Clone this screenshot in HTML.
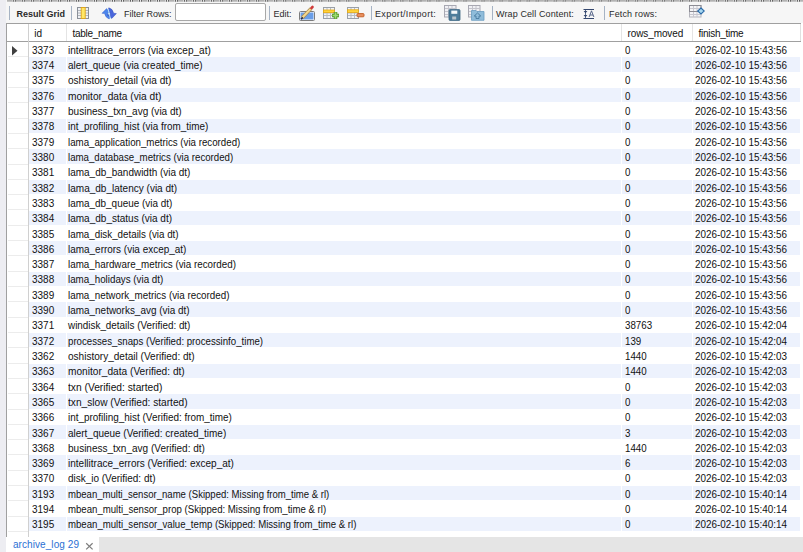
<!DOCTYPE html>
<html><head><meta charset="utf-8">
<style>
*{margin:0;padding:0;box-sizing:border-box}
html,body{width:803px;height:552px;overflow:hidden}
body{position:relative;background:#ededf2;font-family:"Liberation Sans",sans-serif;color:#111}
.a{position:absolute}
#tb{left:6px;top:0;width:797px;height:23px;background:#f6f6f6}
#dots{left:7px;top:0;width:796px;height:1px;background:repeating-linear-gradient(90deg,#4a4a4a 0 1px,#a0a0a0 1px 2px)}
#dots2{left:7px;top:1px;width:796px;height:1px;background:repeating-linear-gradient(90deg,#b4b4b4 0 1px,#dcdcdc 1px 2px)}
.sep{width:1px;height:14px;top:6px;background:#a6b3c4}
.tt{font-size:9px;line-height:9px;color:#2a2a2a;white-space:nowrap}
#grid{left:6px;top:23px;width:797px;height:514px;background:#fff;border-left:1px solid #a0a0a0}
#hdr{left:6px;top:23px;width:795px;height:19px;border-top:1px solid #a0a0a0;border-bottom:1px solid #a0a0a0;background:#fff}
.hs{top:24px;width:1px;height:17px;background:#e4e4e4}
.ht{font-size:10px;line-height:10px;white-space:nowrap;color:#111}
.row{position:absolute;left:6px;width:795px;height:15.31px}
.ind{position:absolute;left:2px;top:0;width:21px;height:100%;border-bottom:1px solid #ececec}
.c{position:absolute;top:0;height:100%;font-size:10px;line-height:15.31px;white-space:nowrap;overflow:hidden}
.alt .c{background:#edf2fd;border-bottom:1px solid #fff}
.c span{position:relative;top:0.95px;left:3px}
#tab{left:6px;top:537px;width:93px;height:15px;background:#fff}
#tabgray{left:99px;top:537px;width:704px;height:15px;background:#e5e5e5}
</style></head><body>
<div class="a" id="tb"></div>
<svg class="a" style="left:7px;top:0" width="796" height="2" viewBox="0 0 796 2"><rect x="0" y="0" width="796" height="1.7" fill="#b2b2b2"/><rect x="-3.91" y="0" width="3.90" height="1.7" fill="#ececec"/><rect x="-3.21" y="0" width="1" height="1.7" fill="#5c5c5c"/><rect x="-1.16" y="0" width="1" height="1.7" fill="#5c5c5c"/><rect x="5.10" y="0" width="3.90" height="1.7" fill="#ececec"/><rect x="5.80" y="0" width="1" height="1.7" fill="#5c5c5c"/><rect x="7.85" y="0" width="1" height="1.7" fill="#5c5c5c"/><rect x="14.11" y="0" width="3.90" height="1.7" fill="#ececec"/><rect x="14.81" y="0" width="1" height="1.7" fill="#5c5c5c"/><rect x="16.86" y="0" width="1" height="1.7" fill="#5c5c5c"/><rect x="23.13" y="0" width="3.90" height="1.7" fill="#ececec"/><rect x="23.83" y="0" width="1" height="1.7" fill="#5c5c5c"/><rect x="25.88" y="0" width="1" height="1.7" fill="#5c5c5c"/><rect x="32.14" y="0" width="3.90" height="1.7" fill="#ececec"/><rect x="32.84" y="0" width="1" height="1.7" fill="#5c5c5c"/><rect x="34.89" y="0" width="1" height="1.7" fill="#5c5c5c"/><rect x="41.15" y="0" width="3.90" height="1.7" fill="#ececec"/><rect x="41.85" y="0" width="1" height="1.7" fill="#5c5c5c"/><rect x="43.90" y="0" width="1" height="1.7" fill="#5c5c5c"/><rect x="50.16" y="0" width="3.90" height="1.7" fill="#ececec"/><rect x="50.86" y="0" width="1" height="1.7" fill="#5c5c5c"/><rect x="52.91" y="0" width="1" height="1.7" fill="#5c5c5c"/><rect x="59.18" y="0" width="3.90" height="1.7" fill="#ececec"/><rect x="59.88" y="0" width="1" height="1.7" fill="#5c5c5c"/><rect x="61.93" y="0" width="1" height="1.7" fill="#5c5c5c"/><rect x="68.19" y="0" width="3.90" height="1.7" fill="#ececec"/><rect x="68.89" y="0" width="1" height="1.7" fill="#5c5c5c"/><rect x="70.94" y="0" width="1" height="1.7" fill="#5c5c5c"/><rect x="77.20" y="0" width="3.90" height="1.7" fill="#ececec"/><rect x="77.90" y="0" width="1" height="1.7" fill="#5c5c5c"/><rect x="79.95" y="0" width="1" height="1.7" fill="#5c5c5c"/><rect x="86.22" y="0" width="3.90" height="1.7" fill="#ececec"/><rect x="86.92" y="0" width="1" height="1.7" fill="#5c5c5c"/><rect x="88.97" y="0" width="1" height="1.7" fill="#5c5c5c"/><rect x="95.23" y="0" width="3.90" height="1.7" fill="#ececec"/><rect x="95.93" y="0" width="1" height="1.7" fill="#5c5c5c"/><rect x="97.98" y="0" width="1" height="1.7" fill="#5c5c5c"/><rect x="104.24" y="0" width="3.90" height="1.7" fill="#ececec"/><rect x="104.94" y="0" width="1" height="1.7" fill="#5c5c5c"/><rect x="106.99" y="0" width="1" height="1.7" fill="#5c5c5c"/><rect x="113.26" y="0" width="3.90" height="1.7" fill="#ececec"/><rect x="113.96" y="0" width="1" height="1.7" fill="#5c5c5c"/><rect x="116.01" y="0" width="1" height="1.7" fill="#5c5c5c"/><rect x="122.27" y="0" width="3.90" height="1.7" fill="#ececec"/><rect x="122.97" y="0" width="1" height="1.7" fill="#5c5c5c"/><rect x="125.02" y="0" width="1" height="1.7" fill="#5c5c5c"/><rect x="131.28" y="0" width="3.90" height="1.7" fill="#ececec"/><rect x="131.98" y="0" width="1" height="1.7" fill="#5c5c5c"/><rect x="134.03" y="0" width="1" height="1.7" fill="#5c5c5c"/><rect x="140.30" y="0" width="3.90" height="1.7" fill="#ececec"/><rect x="141.00" y="0" width="1" height="1.7" fill="#5c5c5c"/><rect x="143.05" y="0" width="1" height="1.7" fill="#5c5c5c"/><rect x="149.31" y="0" width="3.90" height="1.7" fill="#ececec"/><rect x="150.01" y="0" width="1" height="1.7" fill="#5c5c5c"/><rect x="152.06" y="0" width="1" height="1.7" fill="#5c5c5c"/><rect x="158.32" y="0" width="3.90" height="1.7" fill="#ececec"/><rect x="159.02" y="0" width="1" height="1.7" fill="#5c5c5c"/><rect x="161.07" y="0" width="1" height="1.7" fill="#5c5c5c"/><rect x="167.33" y="0" width="3.90" height="1.7" fill="#ececec"/><rect x="168.03" y="0" width="1" height="1.7" fill="#5c5c5c"/><rect x="170.08" y="0" width="1" height="1.7" fill="#5c5c5c"/><rect x="176.35" y="0" width="3.90" height="1.7" fill="#ececec"/><rect x="177.05" y="0" width="1" height="1.7" fill="#5c5c5c"/><rect x="179.10" y="0" width="1" height="1.7" fill="#5c5c5c"/><rect x="185.36" y="0" width="3.90" height="1.7" fill="#ececec"/><rect x="186.06" y="0" width="1" height="1.7" fill="#5c5c5c"/><rect x="188.11" y="0" width="1" height="1.7" fill="#5c5c5c"/><rect x="194.37" y="0" width="3.90" height="1.7" fill="#ececec"/><rect x="195.07" y="0" width="1" height="1.7" fill="#5c5c5c"/><rect x="197.12" y="0" width="1" height="1.7" fill="#5c5c5c"/><rect x="203.39" y="0" width="3.90" height="1.7" fill="#ececec"/><rect x="204.09" y="0" width="1" height="1.7" fill="#5c5c5c"/><rect x="206.14" y="0" width="1" height="1.7" fill="#5c5c5c"/><rect x="212.40" y="0" width="3.90" height="1.7" fill="#ececec"/><rect x="213.10" y="0" width="1" height="1.7" fill="#5c5c5c"/><rect x="215.15" y="0" width="1" height="1.7" fill="#5c5c5c"/><rect x="221.41" y="0" width="3.90" height="1.7" fill="#ececec"/><rect x="222.11" y="0" width="1" height="1.7" fill="#5c5c5c"/><rect x="224.16" y="0" width="1" height="1.7" fill="#5c5c5c"/><rect x="230.43" y="0" width="3.90" height="1.7" fill="#ececec"/><rect x="231.12" y="0" width="1" height="1.7" fill="#5c5c5c"/><rect x="233.18" y="0" width="1" height="1.7" fill="#5c5c5c"/><rect x="239.44" y="0" width="3.90" height="1.7" fill="#ececec"/><rect x="240.14" y="0" width="1" height="1.7" fill="#5c5c5c"/><rect x="242.19" y="0" width="1" height="1.7" fill="#5c5c5c"/><rect x="248.45" y="0" width="3.90" height="1.7" fill="#ececec"/><rect x="249.15" y="0" width="1" height="1.7" fill="#5c5c5c"/><rect x="251.20" y="0" width="1" height="1.7" fill="#5c5c5c"/><rect x="257.46" y="0" width="3.90" height="1.7" fill="#ececec"/><rect x="258.16" y="0" width="1" height="1.7" fill="#5c5c5c"/><rect x="260.21" y="0" width="1" height="1.7" fill="#5c5c5c"/><rect x="266.48" y="0" width="3.90" height="1.7" fill="#ececec"/><rect x="267.18" y="0" width="1" height="1.7" fill="#5c5c5c"/><rect x="269.23" y="0" width="1" height="1.7" fill="#5c5c5c"/><rect x="275.49" y="0" width="3.90" height="1.7" fill="#ececec"/><rect x="276.19" y="0" width="1" height="1.7" fill="#5c5c5c"/><rect x="278.24" y="0" width="1" height="1.7" fill="#5c5c5c"/><rect x="284.50" y="0" width="3.90" height="1.7" fill="#ececec"/><rect x="285.20" y="0" width="1" height="1.7" fill="#5c5c5c"/><rect x="287.25" y="0" width="1" height="1.7" fill="#5c5c5c"/><rect x="293.52" y="0" width="3.90" height="1.7" fill="#ececec"/><rect x="294.22" y="0" width="1" height="1.7" fill="#5c5c5c"/><rect x="296.27" y="0" width="1" height="1.7" fill="#5c5c5c"/><rect x="302.53" y="0" width="3.90" height="1.7" fill="#ececec"/><rect x="303.23" y="0" width="1" height="1.7" fill="#5c5c5c"/><rect x="305.28" y="0" width="1" height="1.7" fill="#5c5c5c"/><rect x="311.54" y="0" width="3.90" height="1.7" fill="#ececec"/><rect x="312.24" y="0" width="1" height="1.7" fill="#5c5c5c"/><rect x="314.29" y="0" width="1" height="1.7" fill="#5c5c5c"/><rect x="320.56" y="0" width="3.90" height="1.7" fill="#ececec"/><rect x="321.25" y="0" width="1" height="1.7" fill="#5c5c5c"/><rect x="323.31" y="0" width="1" height="1.7" fill="#5c5c5c"/><rect x="329.57" y="0" width="3.90" height="1.7" fill="#ececec"/><rect x="330.27" y="0" width="1" height="1.7" fill="#5c5c5c"/><rect x="332.32" y="0" width="1" height="1.7" fill="#5c5c5c"/><rect x="338.58" y="0" width="3.90" height="1.7" fill="#ececec"/><rect x="339.28" y="0" width="1" height="1.7" fill="#5c5c5c"/><rect x="341.33" y="0" width="1" height="1.7" fill="#5c5c5c"/><rect x="347.59" y="0" width="3.90" height="1.7" fill="#ececec"/><rect x="348.29" y="0" width="1" height="1.7" fill="#5c5c5c"/><rect x="350.34" y="0" width="1" height="1.7" fill="#5c5c5c"/><rect x="356.61" y="0" width="3.90" height="1.7" fill="#ececec"/><rect x="357.31" y="0" width="1" height="1.7" fill="#5c5c5c"/><rect x="359.36" y="0" width="1" height="1.7" fill="#5c5c5c"/><rect x="365.62" y="0" width="3.90" height="1.7" fill="#ececec"/><rect x="366.32" y="0" width="1" height="1.7" fill="#5c5c5c"/><rect x="368.37" y="0" width="1" height="1.7" fill="#5c5c5c"/><rect x="374.63" y="0" width="3.90" height="1.7" fill="#ececec"/><rect x="375.33" y="0" width="1" height="1.7" fill="#5c5c5c"/><rect x="377.38" y="0" width="1" height="1.7" fill="#5c5c5c"/><rect x="383.65" y="0" width="3.90" height="1.7" fill="#ececec"/><rect x="384.35" y="0" width="1" height="1.7" fill="#5c5c5c"/><rect x="386.40" y="0" width="1" height="1.7" fill="#5c5c5c"/><rect x="392.66" y="0" width="3.90" height="1.7" fill="#ececec"/><rect x="393.36" y="0" width="1" height="1.7" fill="#5c5c5c"/><rect x="395.41" y="0" width="1" height="1.7" fill="#5c5c5c"/><rect x="401.67" y="0" width="3.90" height="1.7" fill="#ececec"/><rect x="402.37" y="0" width="1" height="1.7" fill="#5c5c5c"/><rect x="404.42" y="0" width="1" height="1.7" fill="#5c5c5c"/><rect x="410.69" y="0" width="3.90" height="1.7" fill="#ececec"/><rect x="411.38" y="0" width="1" height="1.7" fill="#5c5c5c"/><rect x="413.44" y="0" width="1" height="1.7" fill="#5c5c5c"/><rect x="419.70" y="0" width="3.90" height="1.7" fill="#ececec"/><rect x="420.40" y="0" width="1" height="1.7" fill="#5c5c5c"/><rect x="422.45" y="0" width="1" height="1.7" fill="#5c5c5c"/><rect x="428.71" y="0" width="3.90" height="1.7" fill="#ececec"/><rect x="429.41" y="0" width="1" height="1.7" fill="#5c5c5c"/><rect x="431.46" y="0" width="1" height="1.7" fill="#5c5c5c"/><rect x="437.72" y="0" width="3.90" height="1.7" fill="#ececec"/><rect x="438.42" y="0" width="1" height="1.7" fill="#5c5c5c"/><rect x="440.47" y="0" width="1" height="1.7" fill="#5c5c5c"/><rect x="446.74" y="0" width="3.90" height="1.7" fill="#ececec"/><rect x="447.44" y="0" width="1" height="1.7" fill="#5c5c5c"/><rect x="449.49" y="0" width="1" height="1.7" fill="#5c5c5c"/><rect x="455.75" y="0" width="3.90" height="1.7" fill="#ececec"/><rect x="456.45" y="0" width="1" height="1.7" fill="#5c5c5c"/><rect x="458.50" y="0" width="1" height="1.7" fill="#5c5c5c"/><rect x="464.76" y="0" width="3.90" height="1.7" fill="#ececec"/><rect x="465.46" y="0" width="1" height="1.7" fill="#5c5c5c"/><rect x="467.51" y="0" width="1" height="1.7" fill="#5c5c5c"/><rect x="473.78" y="0" width="3.90" height="1.7" fill="#ececec"/><rect x="474.48" y="0" width="1" height="1.7" fill="#5c5c5c"/><rect x="476.53" y="0" width="1" height="1.7" fill="#5c5c5c"/><rect x="482.79" y="0" width="3.90" height="1.7" fill="#ececec"/><rect x="483.49" y="0" width="1" height="1.7" fill="#5c5c5c"/><rect x="485.54" y="0" width="1" height="1.7" fill="#5c5c5c"/><rect x="491.80" y="0" width="3.90" height="1.7" fill="#ececec"/><rect x="492.50" y="0" width="1" height="1.7" fill="#5c5c5c"/><rect x="494.55" y="0" width="1" height="1.7" fill="#5c5c5c"/><rect x="500.81" y="0" width="3.90" height="1.7" fill="#ececec"/><rect x="501.51" y="0" width="1" height="1.7" fill="#5c5c5c"/><rect x="503.56" y="0" width="1" height="1.7" fill="#5c5c5c"/><rect x="509.83" y="0" width="3.90" height="1.7" fill="#ececec"/><rect x="510.53" y="0" width="1" height="1.7" fill="#5c5c5c"/><rect x="512.58" y="0" width="1" height="1.7" fill="#5c5c5c"/><rect x="518.84" y="0" width="3.90" height="1.7" fill="#ececec"/><rect x="519.54" y="0" width="1" height="1.7" fill="#5c5c5c"/><rect x="521.59" y="0" width="1" height="1.7" fill="#5c5c5c"/><rect x="527.85" y="0" width="3.90" height="1.7" fill="#ececec"/><rect x="528.55" y="0" width="1" height="1.7" fill="#5c5c5c"/><rect x="530.60" y="0" width="1" height="1.7" fill="#5c5c5c"/><rect x="536.87" y="0" width="3.90" height="1.7" fill="#ececec"/><rect x="537.57" y="0" width="1" height="1.7" fill="#5c5c5c"/><rect x="539.62" y="0" width="1" height="1.7" fill="#5c5c5c"/><rect x="545.88" y="0" width="3.90" height="1.7" fill="#ececec"/><rect x="546.58" y="0" width="1" height="1.7" fill="#5c5c5c"/><rect x="548.63" y="0" width="1" height="1.7" fill="#5c5c5c"/><rect x="554.89" y="0" width="3.90" height="1.7" fill="#ececec"/><rect x="555.59" y="0" width="1" height="1.7" fill="#5c5c5c"/><rect x="557.64" y="0" width="1" height="1.7" fill="#5c5c5c"/><rect x="563.91" y="0" width="3.90" height="1.7" fill="#ececec"/><rect x="564.61" y="0" width="1" height="1.7" fill="#5c5c5c"/><rect x="566.66" y="0" width="1" height="1.7" fill="#5c5c5c"/><rect x="572.92" y="0" width="3.90" height="1.7" fill="#ececec"/><rect x="573.62" y="0" width="1" height="1.7" fill="#5c5c5c"/><rect x="575.67" y="0" width="1" height="1.7" fill="#5c5c5c"/><rect x="581.93" y="0" width="3.90" height="1.7" fill="#ececec"/><rect x="582.63" y="0" width="1" height="1.7" fill="#5c5c5c"/><rect x="584.68" y="0" width="1" height="1.7" fill="#5c5c5c"/><rect x="590.94" y="0" width="3.90" height="1.7" fill="#ececec"/><rect x="591.64" y="0" width="1" height="1.7" fill="#5c5c5c"/><rect x="593.69" y="0" width="1" height="1.7" fill="#5c5c5c"/><rect x="599.96" y="0" width="3.90" height="1.7" fill="#ececec"/><rect x="600.66" y="0" width="1" height="1.7" fill="#5c5c5c"/><rect x="602.71" y="0" width="1" height="1.7" fill="#5c5c5c"/><rect x="608.97" y="0" width="3.90" height="1.7" fill="#ececec"/><rect x="609.67" y="0" width="1" height="1.7" fill="#5c5c5c"/><rect x="611.72" y="0" width="1" height="1.7" fill="#5c5c5c"/><rect x="617.98" y="0" width="3.90" height="1.7" fill="#ececec"/><rect x="618.68" y="0" width="1" height="1.7" fill="#5c5c5c"/><rect x="620.73" y="0" width="1" height="1.7" fill="#5c5c5c"/><rect x="627.00" y="0" width="3.90" height="1.7" fill="#ececec"/><rect x="627.70" y="0" width="1" height="1.7" fill="#5c5c5c"/><rect x="629.75" y="0" width="1" height="1.7" fill="#5c5c5c"/><rect x="636.01" y="0" width="3.90" height="1.7" fill="#ececec"/><rect x="636.71" y="0" width="1" height="1.7" fill="#5c5c5c"/><rect x="638.76" y="0" width="1" height="1.7" fill="#5c5c5c"/><rect x="645.02" y="0" width="3.90" height="1.7" fill="#ececec"/><rect x="645.72" y="0" width="1" height="1.7" fill="#5c5c5c"/><rect x="647.77" y="0" width="1" height="1.7" fill="#5c5c5c"/><rect x="654.04" y="0" width="3.90" height="1.7" fill="#ececec"/><rect x="654.74" y="0" width="1" height="1.7" fill="#5c5c5c"/><rect x="656.79" y="0" width="1" height="1.7" fill="#5c5c5c"/><rect x="663.05" y="0" width="3.90" height="1.7" fill="#ececec"/><rect x="663.75" y="0" width="1" height="1.7" fill="#5c5c5c"/><rect x="665.80" y="0" width="1" height="1.7" fill="#5c5c5c"/><rect x="672.06" y="0" width="3.90" height="1.7" fill="#ececec"/><rect x="672.76" y="0" width="1" height="1.7" fill="#5c5c5c"/><rect x="674.81" y="0" width="1" height="1.7" fill="#5c5c5c"/><rect x="681.07" y="0" width="3.90" height="1.7" fill="#ececec"/><rect x="681.77" y="0" width="1" height="1.7" fill="#5c5c5c"/><rect x="683.82" y="0" width="1" height="1.7" fill="#5c5c5c"/><rect x="690.09" y="0" width="3.90" height="1.7" fill="#ececec"/><rect x="690.79" y="0" width="1" height="1.7" fill="#5c5c5c"/><rect x="692.84" y="0" width="1" height="1.7" fill="#5c5c5c"/><rect x="699.10" y="0" width="3.90" height="1.7" fill="#ececec"/><rect x="699.80" y="0" width="1" height="1.7" fill="#5c5c5c"/><rect x="701.85" y="0" width="1" height="1.7" fill="#5c5c5c"/><rect x="708.11" y="0" width="3.90" height="1.7" fill="#ececec"/><rect x="708.81" y="0" width="1" height="1.7" fill="#5c5c5c"/><rect x="710.86" y="0" width="1" height="1.7" fill="#5c5c5c"/><rect x="717.13" y="0" width="3.90" height="1.7" fill="#ececec"/><rect x="717.83" y="0" width="1" height="1.7" fill="#5c5c5c"/><rect x="719.88" y="0" width="1" height="1.7" fill="#5c5c5c"/><rect x="726.14" y="0" width="3.90" height="1.7" fill="#ececec"/><rect x="726.84" y="0" width="1" height="1.7" fill="#5c5c5c"/><rect x="728.89" y="0" width="1" height="1.7" fill="#5c5c5c"/><rect x="735.15" y="0" width="3.90" height="1.7" fill="#ececec"/><rect x="735.85" y="0" width="1" height="1.7" fill="#5c5c5c"/><rect x="737.90" y="0" width="1" height="1.7" fill="#5c5c5c"/><rect x="744.17" y="0" width="3.90" height="1.7" fill="#ececec"/><rect x="744.87" y="0" width="1" height="1.7" fill="#5c5c5c"/><rect x="746.92" y="0" width="1" height="1.7" fill="#5c5c5c"/><rect x="753.18" y="0" width="3.90" height="1.7" fill="#ececec"/><rect x="753.88" y="0" width="1" height="1.7" fill="#5c5c5c"/><rect x="755.93" y="0" width="1" height="1.7" fill="#5c5c5c"/><rect x="762.19" y="0" width="3.90" height="1.7" fill="#ececec"/><rect x="762.89" y="0" width="1" height="1.7" fill="#5c5c5c"/><rect x="764.94" y="0" width="1" height="1.7" fill="#5c5c5c"/><rect x="771.20" y="0" width="3.90" height="1.7" fill="#ececec"/><rect x="771.90" y="0" width="1" height="1.7" fill="#5c5c5c"/><rect x="773.95" y="0" width="1" height="1.7" fill="#5c5c5c"/><rect x="780.22" y="0" width="3.90" height="1.7" fill="#ececec"/><rect x="780.92" y="0" width="1" height="1.7" fill="#5c5c5c"/><rect x="782.97" y="0" width="1" height="1.7" fill="#5c5c5c"/><rect x="789.23" y="0" width="3.90" height="1.7" fill="#ececec"/><rect x="789.93" y="0" width="1" height="1.7" fill="#5c5c5c"/><rect x="791.98" y="0" width="1" height="1.7" fill="#5c5c5c"/></svg>
<div class="a sep" style="left:9px"></div>
<div class="a tt" style="left:16.6px;top:9.5px;font-weight:bold">Result Grid</div>
<div class="a sep" style="left:71px"></div>
<svg class="a" style="left:77px;top:7px" width="12" height="12" viewBox="0 0 12 12">
 <rect x="0.5" y="0.5" width="11" height="11" fill="#eef0f3" stroke="#8a9099"/>
 <path d="M1 3.5H11M1 6H11M1 8.5H11" stroke="#b0b5bc" stroke-width="1"/>
 <rect x="4.2" y="0.5" width="4" height="11" fill="#ffe866" stroke="#e0a418" stroke-width="0.9"/>
</svg>
<svg class="a" style="left:98px;top:3px" width="24" height="20" viewBox="0 0 24 20">
 <path d="M8.6 5.6 L4 10.3 L6.6 10.6 Q7.6 14.8 11.2 16 L12 14 Q10 12.8 9.6 10.2 L11.6 9.6 Z" fill="#4c86ec" stroke="#3a62c8" stroke-width="0.5"/>
 <path d="M10.8 4.8 Q14.8 5.8 15.6 10.2 L18.4 10.6 L13.8 15.4 L9.4 12 L12.4 11.4 Q12 8.4 10.2 6.8 Z" fill="#4a66dc" stroke="#3450b8" stroke-width="0.5"/>
 <path d="M10 5.8 L12.4 15.6" stroke="#bfeeff" stroke-width="0.9"/>
</svg>
<div class="a tt" style="left:124px;top:9.5px">Filter Rows:</div>
<div class="a" style="left:175px;top:3px;width:91px;height:18px;border:1px solid #a8a8a8;border-radius:2px;background:#fff"></div>
<div class="a sep" style="left:269px"></div>
<div class="a tt" style="left:273.4px;top:9.5px">Edit:</div>
<svg class="a" style="left:299px;top:5px" width="17" height="16" viewBox="0 0 17 16">
 <rect x="0.5" y="6.5" width="15" height="9" rx="1" fill="#e8eef8" stroke="#7c7c7c"/>
 <rect x="1.6" y="7.6" width="12.8" height="6.8" fill="#6a9ee8"/>
 <path d="M3.2 12.8 L12.2 3.4" stroke="#a88a50" stroke-width="3.4"/>
 <path d="M3.2 12.8 L12.2 3.4" stroke="#f4d890" stroke-width="2"/>
 <path d="M12.4 3.1 L13.5 2" stroke="#d03a3a" stroke-width="2.6" stroke-linecap="round"/>
 <path d="M2 14.2 L3.8 12.4" stroke="#2a2a40" stroke-width="1.6"/>
</svg>
<svg class="a" style="left:323px;top:7px" width="18" height="13" viewBox="0 0 18 13">
 <rect x="0.5" y="0.5" width="11" height="11" fill="#f2f3f5" stroke="#9aa0a8"/>
 <path d="M1 6H11M1 8.5H11M4 1V11M7.5 1V11" stroke="#b8bcc2" stroke-width="1"/>
 <rect x="0.5" y="3" width="11" height="2.6" fill="#ffd43a" stroke="#e8a810" stroke-width="0.8"/>
 <path d="M12.5 5 V12 M9 8.5 H16" stroke="#5a9a30" stroke-width="3.6"/>
 <path d="M12.5 5.6 V11.4 M9.6 8.5 H15.4" stroke="#9ddc70" stroke-width="1.6"/>
</svg>
<svg class="a" style="left:347px;top:7px" width="18" height="13" viewBox="0 0 18 13">
 <rect x="0.5" y="0.5" width="11" height="11" fill="#f2f3f5" stroke="#9aa0a8"/>
 <path d="M1 6H11M1 8.5H11M4 1V11M7.5 1V11" stroke="#b8bcc2" stroke-width="1"/>
 <rect x="0.5" y="2.8" width="11" height="2.6" fill="#ffd43a" stroke="#e8a810" stroke-width="0.8"/>
 <rect x="10" y="6.6" width="7" height="3.2" rx="0.8" fill="#e89060" stroke="#c05a20" stroke-width="0.9"/>
</svg>
<div class="a sep" style="left:371px"></div>
<div class="a tt" style="left:375px;top:9.5px;letter-spacing:0.33px">Export/Import:</div>
<svg class="a" style="left:444px;top:5px" width="17" height="16" viewBox="0 0 17 16">
 <rect x="0.5" y="0.5" width="11.5" height="11.5" fill="#f0f0f4" stroke="#a8a8b2"/>
 <path d="M1 3.5H12M1 6.5H12M1 9.5H12M4.5 1V12M8 1V12" stroke="#c4c4cc" stroke-width="1"/>
 <rect x="5" y="4.6" width="11" height="10.8" rx="1" fill="#4d7c9a" stroke="#3a6482" stroke-width="0.8"/>
 <rect x="7.3" y="5.6" width="6" height="3.2" fill="#f4f8fa"/>
 <rect x="8.2" y="11.5" width="4" height="3" fill="#b8c4cc"/>
</svg>
<svg class="a" style="left:468px;top:5px" width="18" height="16" viewBox="0 0 18 16">
 <rect x="0.5" y="0.5" width="11.5" height="11.5" fill="#f0f0f4" stroke="#a8a8b2"/>
 <path d="M1 3.5H12M1 6.5H12M1 9.5H12M4.5 1V12M8 1V12" stroke="#c4c4cc" stroke-width="1"/>
 <path d="M3.5 5.5 H8 L9 6.5 H16 V15.3 H3.5Z" fill="#8fbcda" stroke="#6a9cc0" stroke-width="0.8"/>
 <path d="M9.5 8 L12.8 11 L11 11 L11 13.5 L8 13.5 L8 11 L6.2 11Z" fill="none" stroke="#4a7ca0" stroke-width="0.9"/>
</svg>
<div class="a sep" style="left:492px"></div>
<div class="a tt" style="left:496px;top:9.5px;letter-spacing:0.11px">Wrap Cell Content:</div>
<svg class="a" style="left:583px;top:8px" width="12" height="12" viewBox="0 0 12 12">
 <path d="M0.5 1.5H11M0.5 10.5H11" stroke="#34476e" stroke-width="1"/>
 <path d="M2.5 2V10" stroke="#34476e" stroke-width="0.8"/>
 <path d="M0.6 2.9 L4.4 2.9 L2.5 5.3Z M0.6 7 L4.4 7 L2.5 9.3Z" fill="#34476e"/>
 <path d="M6.1 9 L8.5 2.8 L10.9 9 M7 7 H10" fill="none" stroke="#4a5a80" stroke-width="0.9"/>
</svg>
<div class="a sep" style="left:604px"></div>
<div class="a tt" style="left:609px;top:9.5px;letter-spacing:0.14px">Fetch rows:</div>
<svg class="a" style="left:689px;top:5px" width="16" height="13" viewBox="0 0 16 13">
 <rect x="0.5" y="0.5" width="11.5" height="11.5" fill="#f4f4f6" stroke="#b4b4bc"/>
 <path d="M1 3.5H12M1 6.5H12M1 9.5H12M4.5 1V12M8 1V12" stroke="#c8c8d0" stroke-width="1"/>
 <rect x="0.5" y="0.5" width="11.5" height="6" fill="none" stroke="#8c8c94"/>
 <path d="M12 3 L15.3 6 L12 9 L8.7 6Z" fill="#a8d8f0" stroke="#2a6aa8" stroke-width="1.1"/>
</svg>

<div class="a" id="grid"></div>
<div class="a" id="hdr"></div>
<div class="a hs" style="left:66px"></div>
<div class="a hs" style="left:621px"></div>
<div class="a hs" style="left:692px"></div>
<div class="a hs" style="left:800px;background:#e0e0e0"></div>
<div class="a ht" style="left:34.3px;top:29px">id</div>
<div class="a ht" style="left:72.5px;top:29px;letter-spacing:-0.3px">table_name</div>
<div class="a ht" style="left:627.5px;top:29px;letter-spacing:-0.1px">rows_moved</div>
<div class="a ht" style="left:698.5px;top:29px;letter-spacing:-0.28px">finish_time</div>
<div class="a" style="left:6px;top:42px;width:797px;height:494px;overflow:hidden">
<div style="position:absolute;left:-6px;top:-42px;width:803px;height:552px">
<div class="row" style="top:42.10px">
<div class="ind"></div>
<div class="c" style="left:23px;width:37px;font-size:10.5px"><span style="left:3px;top:0.91px;display:inline-block;transform-origin:0 0;transform:scaleX(0.95)">3373</span></div>
<div class="c" style="left:61px;width:554px;font-size:11.0px"><span style="left:0.8px;top:0.74px;display:inline-block;transform-origin:0 0;transform:scaleX(0.9123)">intellitrace_errors (via excep_at)</span></div>
<div class="c" style="left:616px;width:70px;font-size:10.5px"><span style="left:2.7px;top:0.91px;display:inline-block;transform-origin:0 0;transform:scaleX(0.93)">0</span></div>
<div class="c" style="left:687px;width:107px;font-size:10.5px"><span style="left:2.2px;top:0.91px;display:inline-block;transform-origin:0 0;transform:scaleX(0.943)">2026-02-10 15:43:56</span></div>
</div>
<div class="row alt" style="top:57.41px">
<div class="ind"></div>
<div class="c" style="left:23px;width:37px;font-size:10.5px"><span style="left:3px;top:0.60px;display:inline-block;transform-origin:0 0;transform:scaleX(0.95)">3374</span></div>
<div class="c" style="left:61px;width:554px;font-size:11.0px"><span style="left:0.8px;top:0.43px;display:inline-block;transform-origin:0 0;transform:scaleX(0.9014)">alert_queue (via created_time)</span></div>
<div class="c" style="left:616px;width:70px;font-size:10.5px"><span style="left:2.7px;top:0.60px;display:inline-block;transform-origin:0 0;transform:scaleX(0.93)">0</span></div>
<div class="c" style="left:687px;width:107px;font-size:10.5px"><span style="left:2.2px;top:0.60px;display:inline-block;transform-origin:0 0;transform:scaleX(0.943)">2026-02-10 15:43:56</span></div>
</div>
<div class="row" style="top:72.72px">
<div class="ind"></div>
<div class="c" style="left:23px;width:37px;font-size:10.5px"><span style="left:3px;top:0.29px;display:inline-block;transform-origin:0 0;transform:scaleX(0.95)">3375</span></div>
<div class="c" style="left:61px;width:554px;font-size:11.0px"><span style="left:0.8px;top:0.12px;display:inline-block;transform-origin:0 0;transform:scaleX(0.9143)">oshistory_detail (via dt)</span></div>
<div class="c" style="left:616px;width:70px;font-size:10.5px"><span style="left:2.7px;top:0.29px;display:inline-block;transform-origin:0 0;transform:scaleX(0.93)">0</span></div>
<div class="c" style="left:687px;width:107px;font-size:10.5px"><span style="left:2.2px;top:0.29px;display:inline-block;transform-origin:0 0;transform:scaleX(0.943)">2026-02-10 15:43:56</span></div>
</div>
<div class="row alt" style="top:88.03px">
<div class="ind"></div>
<div class="c" style="left:23px;width:37px;font-size:10.5px"><span style="left:3px;top:0.98px;display:inline-block;transform-origin:0 0;transform:scaleX(0.95)">3376</span></div>
<div class="c" style="left:61px;width:554px;font-size:11.0px"><span style="left:0.8px;top:0.81px;display:inline-block;transform-origin:0 0;transform:scaleX(0.9261)">monitor_data (via dt)</span></div>
<div class="c" style="left:616px;width:70px;font-size:10.5px"><span style="left:2.7px;top:0.98px;display:inline-block;transform-origin:0 0;transform:scaleX(0.93)">0</span></div>
<div class="c" style="left:687px;width:107px;font-size:10.5px"><span style="left:2.2px;top:0.98px;display:inline-block;transform-origin:0 0;transform:scaleX(0.943)">2026-02-10 15:43:56</span></div>
</div>
<div class="row" style="top:103.34px">
<div class="ind"></div>
<div class="c" style="left:23px;width:37px;font-size:10.5px"><span style="left:3px;top:0.67px;display:inline-block;transform-origin:0 0;transform:scaleX(0.95)">3377</span></div>
<div class="c" style="left:61px;width:554px;font-size:11.0px"><span style="left:0.8px;top:0.50px;display:inline-block;transform-origin:0 0;transform:scaleX(0.9113)">business_txn_avg (via dt)</span></div>
<div class="c" style="left:616px;width:70px;font-size:10.5px"><span style="left:2.7px;top:0.67px;display:inline-block;transform-origin:0 0;transform:scaleX(0.93)">0</span></div>
<div class="c" style="left:687px;width:107px;font-size:10.5px"><span style="left:2.2px;top:0.67px;display:inline-block;transform-origin:0 0;transform:scaleX(0.943)">2026-02-10 15:43:56</span></div>
</div>
<div class="row alt" style="top:118.65px">
<div class="ind"></div>
<div class="c" style="left:23px;width:37px;font-size:10.5px"><span style="left:3px;top:0.36px;display:inline-block;transform-origin:0 0;transform:scaleX(0.95)">3378</span></div>
<div class="c" style="left:61px;width:554px;font-size:11.0px"><span style="left:0.8px;top:0.19px;display:inline-block;transform-origin:0 0;transform:scaleX(0.8994)">int_profiling_hist (via from_time)</span></div>
<div class="c" style="left:616px;width:70px;font-size:10.5px"><span style="left:2.7px;top:0.36px;display:inline-block;transform-origin:0 0;transform:scaleX(0.93)">0</span></div>
<div class="c" style="left:687px;width:107px;font-size:10.5px"><span style="left:2.2px;top:0.36px;display:inline-block;transform-origin:0 0;transform:scaleX(0.943)">2026-02-10 15:43:56</span></div>
</div>
<div class="row" style="top:133.96px">
<div class="ind"></div>
<div class="c" style="left:23px;width:37px;font-size:10.5px"><span style="left:3px;top:1.05px;display:inline-block;transform-origin:0 0;transform:scaleX(0.95)">3379</span></div>
<div class="c" style="left:61px;width:554px;font-size:11.0px"><span style="left:0.8px;top:0.88px;display:inline-block;transform-origin:0 0;transform:scaleX(0.8835)">lama_application_metrics (via recorded)</span></div>
<div class="c" style="left:616px;width:70px;font-size:10.5px"><span style="left:2.7px;top:1.05px;display:inline-block;transform-origin:0 0;transform:scaleX(0.93)">0</span></div>
<div class="c" style="left:687px;width:107px;font-size:10.5px"><span style="left:2.2px;top:1.05px;display:inline-block;transform-origin:0 0;transform:scaleX(0.943)">2026-02-10 15:43:56</span></div>
</div>
<div class="row alt" style="top:149.27px">
<div class="ind"></div>
<div class="c" style="left:23px;width:37px;font-size:10.5px"><span style="left:3px;top:0.74px;display:inline-block;transform-origin:0 0;transform:scaleX(0.95)">3380</span></div>
<div class="c" style="left:61px;width:554px;font-size:11.0px"><span style="left:0.8px;top:0.57px;display:inline-block;transform-origin:0 0;transform:scaleX(0.8802)">lama_database_metrics (via recorded)</span></div>
<div class="c" style="left:616px;width:70px;font-size:10.5px"><span style="left:2.7px;top:0.74px;display:inline-block;transform-origin:0 0;transform:scaleX(0.93)">0</span></div>
<div class="c" style="left:687px;width:107px;font-size:10.5px"><span style="left:2.2px;top:0.74px;display:inline-block;transform-origin:0 0;transform:scaleX(0.943)">2026-02-10 15:43:56</span></div>
</div>
<div class="row" style="top:164.58px">
<div class="ind"></div>
<div class="c" style="left:23px;width:37px;font-size:10.5px"><span style="left:3px;top:0.43px;display:inline-block;transform-origin:0 0;transform:scaleX(0.95)">3381</span></div>
<div class="c" style="left:61px;width:554px;font-size:11.0px"><span style="left:0.8px;top:0.26px;display:inline-block;transform-origin:0 0;transform:scaleX(0.9060)">lama_db_bandwidth (via dt)</span></div>
<div class="c" style="left:616px;width:70px;font-size:10.5px"><span style="left:2.7px;top:0.43px;display:inline-block;transform-origin:0 0;transform:scaleX(0.93)">0</span></div>
<div class="c" style="left:687px;width:107px;font-size:10.5px"><span style="left:2.2px;top:0.43px;display:inline-block;transform-origin:0 0;transform:scaleX(0.943)">2026-02-10 15:43:56</span></div>
</div>
<div class="row alt" style="top:179.89px">
<div class="ind"></div>
<div class="c" style="left:23px;width:37px;font-size:10.5px"><span style="left:3px;top:1.12px;display:inline-block;transform-origin:0 0;transform:scaleX(0.95)">3382</span></div>
<div class="c" style="left:61px;width:554px;font-size:11.0px"><span style="left:0.8px;top:0.95px;display:inline-block;transform-origin:0 0;transform:scaleX(0.9110)">lama_db_latency (via dt)</span></div>
<div class="c" style="left:616px;width:70px;font-size:10.5px"><span style="left:2.7px;top:1.12px;display:inline-block;transform-origin:0 0;transform:scaleX(0.93)">0</span></div>
<div class="c" style="left:687px;width:107px;font-size:10.5px"><span style="left:2.2px;top:1.12px;display:inline-block;transform-origin:0 0;transform:scaleX(0.943)">2026-02-10 15:43:56</span></div>
</div>
<div class="row" style="top:195.20px">
<div class="ind"></div>
<div class="c" style="left:23px;width:37px;font-size:10.5px"><span style="left:3px;top:0.81px;display:inline-block;transform-origin:0 0;transform:scaleX(0.95)">3383</span></div>
<div class="c" style="left:61px;width:554px;font-size:11.0px"><span style="left:0.8px;top:0.64px;display:inline-block;transform-origin:0 0;transform:scaleX(0.9027)">lama_db_queue (via dt)</span></div>
<div class="c" style="left:616px;width:70px;font-size:10.5px"><span style="left:2.7px;top:0.81px;display:inline-block;transform-origin:0 0;transform:scaleX(0.93)">0</span></div>
<div class="c" style="left:687px;width:107px;font-size:10.5px"><span style="left:2.2px;top:0.81px;display:inline-block;transform-origin:0 0;transform:scaleX(0.943)">2026-02-10 15:43:56</span></div>
</div>
<div class="row alt" style="top:210.51px">
<div class="ind"></div>
<div class="c" style="left:23px;width:37px;font-size:10.5px"><span style="left:3px;top:0.50px;display:inline-block;transform-origin:0 0;transform:scaleX(0.95)">3384</span></div>
<div class="c" style="left:61px;width:554px;font-size:11.0px"><span style="left:0.8px;top:0.33px;display:inline-block;transform-origin:0 0;transform:scaleX(0.9097)">lama_db_status (via dt)</span></div>
<div class="c" style="left:616px;width:70px;font-size:10.5px"><span style="left:2.7px;top:0.50px;display:inline-block;transform-origin:0 0;transform:scaleX(0.93)">0</span></div>
<div class="c" style="left:687px;width:107px;font-size:10.5px"><span style="left:2.2px;top:0.50px;display:inline-block;transform-origin:0 0;transform:scaleX(0.943)">2026-02-10 15:43:56</span></div>
</div>
<div class="row" style="top:225.82px">
<div class="ind"></div>
<div class="c" style="left:23px;width:37px;font-size:10.5px"><span style="left:3px;top:1.19px;display:inline-block;transform-origin:0 0;transform:scaleX(0.95)">3385</span></div>
<div class="c" style="left:61px;width:554px;font-size:11.0px"><span style="left:0.8px;top:1.02px;display:inline-block;transform-origin:0 0;transform:scaleX(0.8911)">lama_disk_details (via dt)</span></div>
<div class="c" style="left:616px;width:70px;font-size:10.5px"><span style="left:2.7px;top:1.19px;display:inline-block;transform-origin:0 0;transform:scaleX(0.93)">0</span></div>
<div class="c" style="left:687px;width:107px;font-size:10.5px"><span style="left:2.2px;top:1.19px;display:inline-block;transform-origin:0 0;transform:scaleX(0.943)">2026-02-10 15:43:56</span></div>
</div>
<div class="row alt" style="top:241.13px">
<div class="ind"></div>
<div class="c" style="left:23px;width:37px;font-size:10.5px"><span style="left:3px;top:0.88px;display:inline-block;transform-origin:0 0;transform:scaleX(0.95)">3386</span></div>
<div class="c" style="left:61px;width:554px;font-size:11.0px"><span style="left:0.8px;top:0.71px;display:inline-block;transform-origin:0 0;transform:scaleX(0.9047)">lama_errors (via excep_at)</span></div>
<div class="c" style="left:616px;width:70px;font-size:10.5px"><span style="left:2.7px;top:0.88px;display:inline-block;transform-origin:0 0;transform:scaleX(0.93)">0</span></div>
<div class="c" style="left:687px;width:107px;font-size:10.5px"><span style="left:2.2px;top:0.88px;display:inline-block;transform-origin:0 0;transform:scaleX(0.943)">2026-02-10 15:43:56</span></div>
</div>
<div class="row" style="top:256.44px">
<div class="ind"></div>
<div class="c" style="left:23px;width:37px;font-size:10.5px"><span style="left:3px;top:0.57px;display:inline-block;transform-origin:0 0;transform:scaleX(0.95)">3387</span></div>
<div class="c" style="left:61px;width:554px;font-size:11.0px"><span style="left:0.8px;top:0.40px;display:inline-block;transform-origin:0 0;transform:scaleX(0.8920)">lama_hardware_metrics (via recorded)</span></div>
<div class="c" style="left:616px;width:70px;font-size:10.5px"><span style="left:2.7px;top:0.57px;display:inline-block;transform-origin:0 0;transform:scaleX(0.93)">0</span></div>
<div class="c" style="left:687px;width:107px;font-size:10.5px"><span style="left:2.2px;top:0.57px;display:inline-block;transform-origin:0 0;transform:scaleX(0.943)">2026-02-10 15:43:56</span></div>
</div>
<div class="row alt" style="top:271.75px">
<div class="ind"></div>
<div class="c" style="left:23px;width:37px;font-size:10.5px"><span style="left:3px;top:0.26px;display:inline-block;transform-origin:0 0;transform:scaleX(0.95)">3388</span></div>
<div class="c" style="left:61px;width:554px;font-size:11.0px"><span style="left:0.8px;top:0.09px;display:inline-block;transform-origin:0 0;transform:scaleX(0.8906)">lama_holidays (via dt)</span></div>
<div class="c" style="left:616px;width:70px;font-size:10.5px"><span style="left:2.7px;top:0.26px;display:inline-block;transform-origin:0 0;transform:scaleX(0.93)">0</span></div>
<div class="c" style="left:687px;width:107px;font-size:10.5px"><span style="left:2.2px;top:0.26px;display:inline-block;transform-origin:0 0;transform:scaleX(0.943)">2026-02-10 15:43:56</span></div>
</div>
<div class="row" style="top:287.06px">
<div class="ind"></div>
<div class="c" style="left:23px;width:37px;font-size:10.5px"><span style="left:3px;top:0.95px;display:inline-block;transform-origin:0 0;transform:scaleX(0.95)">3389</span></div>
<div class="c" style="left:61px;width:554px;font-size:11.0px"><span style="left:0.8px;top:0.78px;display:inline-block;transform-origin:0 0;transform:scaleX(0.8922)">lama_network_metrics (via recorded)</span></div>
<div class="c" style="left:616px;width:70px;font-size:10.5px"><span style="left:2.7px;top:0.95px;display:inline-block;transform-origin:0 0;transform:scaleX(0.93)">0</span></div>
<div class="c" style="left:687px;width:107px;font-size:10.5px"><span style="left:2.2px;top:0.95px;display:inline-block;transform-origin:0 0;transform:scaleX(0.943)">2026-02-10 15:43:56</span></div>
</div>
<div class="row alt" style="top:302.37px">
<div class="ind"></div>
<div class="c" style="left:23px;width:37px;font-size:10.5px"><span style="left:3px;top:0.64px;display:inline-block;transform-origin:0 0;transform:scaleX(0.95)">3390</span></div>
<div class="c" style="left:61px;width:554px;font-size:11.0px"><span style="left:0.8px;top:0.47px;display:inline-block;transform-origin:0 0;transform:scaleX(0.9038)">lama_networks_avg (via dt)</span></div>
<div class="c" style="left:616px;width:70px;font-size:10.5px"><span style="left:2.7px;top:0.64px;display:inline-block;transform-origin:0 0;transform:scaleX(0.93)">0</span></div>
<div class="c" style="left:687px;width:107px;font-size:10.5px"><span style="left:2.2px;top:0.64px;display:inline-block;transform-origin:0 0;transform:scaleX(0.943)">2026-02-10 15:43:56</span></div>
</div>
<div class="row" style="top:317.68px">
<div class="ind"></div>
<div class="c" style="left:23px;width:37px;font-size:10.5px"><span style="left:3px;top:0.33px;display:inline-block;transform-origin:0 0;transform:scaleX(0.95)">3371</span></div>
<div class="c" style="left:61px;width:554px;font-size:11.0px"><span style="left:0.8px;top:0.16px;display:inline-block;transform-origin:0 0;transform:scaleX(0.8978)">windisk_details (Verified: dt)</span></div>
<div class="c" style="left:616px;width:70px;font-size:10.5px"><span style="left:2.7px;top:0.33px;display:inline-block;transform-origin:0 0;transform:scaleX(0.93)">38763</span></div>
<div class="c" style="left:687px;width:107px;font-size:10.5px"><span style="left:2.2px;top:0.33px;display:inline-block;transform-origin:0 0;transform:scaleX(0.943)">2026-02-10 15:42:04</span></div>
</div>
<div class="row alt" style="top:332.99px">
<div class="ind"></div>
<div class="c" style="left:23px;width:37px;font-size:10.5px"><span style="left:3px;top:1.02px;display:inline-block;transform-origin:0 0;transform:scaleX(0.95)">3372</span></div>
<div class="c" style="left:61px;width:554px;font-size:11.0px"><span style="left:0.8px;top:0.85px;display:inline-block;transform-origin:0 0;transform:scaleX(0.8788)">processes_snaps (Verified: processinfo_time)</span></div>
<div class="c" style="left:616px;width:70px;font-size:10.5px"><span style="left:2.7px;top:1.02px;display:inline-block;transform-origin:0 0;transform:scaleX(0.93)">139</span></div>
<div class="c" style="left:687px;width:107px;font-size:10.5px"><span style="left:2.2px;top:1.02px;display:inline-block;transform-origin:0 0;transform:scaleX(0.943)">2026-02-10 15:42:04</span></div>
</div>
<div class="row" style="top:348.30px">
<div class="ind"></div>
<div class="c" style="left:23px;width:37px;font-size:10.5px"><span style="left:3px;top:0.71px;display:inline-block;transform-origin:0 0;transform:scaleX(0.95)">3362</span></div>
<div class="c" style="left:61px;width:554px;font-size:11.0px"><span style="left:0.8px;top:0.54px;display:inline-block;transform-origin:0 0;transform:scaleX(0.9130)">oshistory_detail (Verified: dt)</span></div>
<div class="c" style="left:616px;width:70px;font-size:10.5px"><span style="left:2.7px;top:0.71px;display:inline-block;transform-origin:0 0;transform:scaleX(0.93)">1440</span></div>
<div class="c" style="left:687px;width:107px;font-size:10.5px"><span style="left:2.2px;top:0.71px;display:inline-block;transform-origin:0 0;transform:scaleX(0.943)">2026-02-10 15:42:03</span></div>
</div>
<div class="row alt" style="top:363.61px">
<div class="ind"></div>
<div class="c" style="left:23px;width:37px;font-size:10.5px"><span style="left:3px;top:0.40px;display:inline-block;transform-origin:0 0;transform:scaleX(0.95)">3363</span></div>
<div class="c" style="left:61px;width:554px;font-size:11.0px"><span style="left:0.8px;top:0.23px;display:inline-block;transform-origin:0 0;transform:scaleX(0.9222)">monitor_data (Verified: dt)</span></div>
<div class="c" style="left:616px;width:70px;font-size:10.5px"><span style="left:2.7px;top:0.40px;display:inline-block;transform-origin:0 0;transform:scaleX(0.93)">1440</span></div>
<div class="c" style="left:687px;width:107px;font-size:10.5px"><span style="left:2.2px;top:0.40px;display:inline-block;transform-origin:0 0;transform:scaleX(0.943)">2026-02-10 15:42:03</span></div>
</div>
<div class="row" style="top:378.92px">
<div class="ind"></div>
<div class="c" style="left:23px;width:37px;font-size:10.5px"><span style="left:3px;top:1.09px;display:inline-block;transform-origin:0 0;transform:scaleX(0.95)">3364</span></div>
<div class="c" style="left:61px;width:554px;font-size:11.0px"><span style="left:0.8px;top:0.92px;display:inline-block;transform-origin:0 0;transform:scaleX(0.9302)">txn (Verified: started)</span></div>
<div class="c" style="left:616px;width:70px;font-size:10.5px"><span style="left:2.7px;top:1.09px;display:inline-block;transform-origin:0 0;transform:scaleX(0.93)">0</span></div>
<div class="c" style="left:687px;width:107px;font-size:10.5px"><span style="left:2.2px;top:1.09px;display:inline-block;transform-origin:0 0;transform:scaleX(0.943)">2026-02-10 15:42:03</span></div>
</div>
<div class="row alt" style="top:394.23px">
<div class="ind"></div>
<div class="c" style="left:23px;width:37px;font-size:10.5px"><span style="left:3px;top:0.78px;display:inline-block;transform-origin:0 0;transform:scaleX(0.95)">3365</span></div>
<div class="c" style="left:61px;width:554px;font-size:11.0px"><span style="left:0.8px;top:0.61px;display:inline-block;transform-origin:0 0;transform:scaleX(0.9225)">txn_slow (Verified: started)</span></div>
<div class="c" style="left:616px;width:70px;font-size:10.5px"><span style="left:2.7px;top:0.78px;display:inline-block;transform-origin:0 0;transform:scaleX(0.93)">0</span></div>
<div class="c" style="left:687px;width:107px;font-size:10.5px"><span style="left:2.2px;top:0.78px;display:inline-block;transform-origin:0 0;transform:scaleX(0.943)">2026-02-10 15:42:03</span></div>
</div>
<div class="row" style="top:409.54px">
<div class="ind"></div>
<div class="c" style="left:23px;width:37px;font-size:10.5px"><span style="left:3px;top:0.47px;display:inline-block;transform-origin:0 0;transform:scaleX(0.95)">3366</span></div>
<div class="c" style="left:61px;width:554px;font-size:11.0px"><span style="left:0.8px;top:0.30px;display:inline-block;transform-origin:0 0;transform:scaleX(0.9028)">int_profiling_hist (Verified: from_time)</span></div>
<div class="c" style="left:616px;width:70px;font-size:10.5px"><span style="left:2.7px;top:0.47px;display:inline-block;transform-origin:0 0;transform:scaleX(0.93)">0</span></div>
<div class="c" style="left:687px;width:107px;font-size:10.5px"><span style="left:2.2px;top:0.47px;display:inline-block;transform-origin:0 0;transform:scaleX(0.943)">2026-02-10 15:42:03</span></div>
</div>
<div class="row alt" style="top:424.85px">
<div class="ind"></div>
<div class="c" style="left:23px;width:37px;font-size:10.5px"><span style="left:3px;top:1.16px;display:inline-block;transform-origin:0 0;transform:scaleX(0.95)">3367</span></div>
<div class="c" style="left:61px;width:554px;font-size:11.0px"><span style="left:0.8px;top:0.99px;display:inline-block;transform-origin:0 0;transform:scaleX(0.9046)">alert_queue (Verified: created_time)</span></div>
<div class="c" style="left:616px;width:70px;font-size:10.5px"><span style="left:2.7px;top:1.16px;display:inline-block;transform-origin:0 0;transform:scaleX(0.93)">3</span></div>
<div class="c" style="left:687px;width:107px;font-size:10.5px"><span style="left:2.2px;top:1.16px;display:inline-block;transform-origin:0 0;transform:scaleX(0.943)">2026-02-10 15:42:03</span></div>
</div>
<div class="row" style="top:440.16px">
<div class="ind"></div>
<div class="c" style="left:23px;width:37px;font-size:10.5px"><span style="left:3px;top:0.85px;display:inline-block;transform-origin:0 0;transform:scaleX(0.95)">3368</span></div>
<div class="c" style="left:61px;width:554px;font-size:11.0px"><span style="left:0.8px;top:0.68px;display:inline-block;transform-origin:0 0;transform:scaleX(0.9101)">business_txn_avg (Verified: dt)</span></div>
<div class="c" style="left:616px;width:70px;font-size:10.5px"><span style="left:2.7px;top:0.85px;display:inline-block;transform-origin:0 0;transform:scaleX(0.93)">1440</span></div>
<div class="c" style="left:687px;width:107px;font-size:10.5px"><span style="left:2.2px;top:0.85px;display:inline-block;transform-origin:0 0;transform:scaleX(0.943)">2026-02-10 15:42:03</span></div>
</div>
<div class="row alt" style="top:455.47px">
<div class="ind"></div>
<div class="c" style="left:23px;width:37px;font-size:10.5px"><span style="left:3px;top:0.54px;display:inline-block;transform-origin:0 0;transform:scaleX(0.95)">3369</span></div>
<div class="c" style="left:61px;width:554px;font-size:11.0px"><span style="left:0.8px;top:0.37px;display:inline-block;transform-origin:0 0;transform:scaleX(0.9105)">intellitrace_errors (Verified: excep_at)</span></div>
<div class="c" style="left:616px;width:70px;font-size:10.5px"><span style="left:2.7px;top:0.54px;display:inline-block;transform-origin:0 0;transform:scaleX(0.93)">6</span></div>
<div class="c" style="left:687px;width:107px;font-size:10.5px"><span style="left:2.2px;top:0.54px;display:inline-block;transform-origin:0 0;transform:scaleX(0.943)">2026-02-10 15:42:03</span></div>
</div>
<div class="row" style="top:470.78px">
<div class="ind"></div>
<div class="c" style="left:23px;width:37px;font-size:10.5px"><span style="left:3px;top:0.23px;display:inline-block;transform-origin:0 0;transform:scaleX(0.95)">3370</span></div>
<div class="c" style="left:61px;width:554px;font-size:11.0px"><span style="left:0.8px;top:0.06px;display:inline-block;transform-origin:0 0;transform:scaleX(0.9062)">disk_io (Verified: dt)</span></div>
<div class="c" style="left:616px;width:70px;font-size:10.5px"><span style="left:2.7px;top:0.23px;display:inline-block;transform-origin:0 0;transform:scaleX(0.93)">0</span></div>
<div class="c" style="left:687px;width:107px;font-size:10.5px"><span style="left:2.2px;top:0.23px;display:inline-block;transform-origin:0 0;transform:scaleX(0.943)">2026-02-10 15:42:03</span></div>
</div>
<div class="row alt" style="top:486.09px">
<div class="ind"></div>
<div class="c" style="left:23px;width:37px;font-size:10.5px"><span style="left:3px;top:0.92px;display:inline-block;transform-origin:0 0;transform:scaleX(0.95)">3193</span></div>
<div class="c" style="left:61px;width:554px;font-size:11.0px"><span style="left:0.8px;top:0.75px;display:inline-block;transform-origin:0 0;transform:scaleX(0.8687)">mbean_multi_sensor_name (Skipped: Missing from_time &amp; rl)</span></div>
<div class="c" style="left:616px;width:70px;font-size:10.5px"><span style="left:2.7px;top:0.92px;display:inline-block;transform-origin:0 0;transform:scaleX(0.93)">0</span></div>
<div class="c" style="left:687px;width:107px;font-size:10.5px"><span style="left:2.2px;top:0.92px;display:inline-block;transform-origin:0 0;transform:scaleX(0.943)">2026-02-10 15:40:14</span></div>
</div>
<div class="row" style="top:501.40px">
<div class="ind"></div>
<div class="c" style="left:23px;width:37px;font-size:10.5px"><span style="left:3px;top:0.61px;display:inline-block;transform-origin:0 0;transform:scaleX(0.95)">3194</span></div>
<div class="c" style="left:61px;width:554px;font-size:11.0px"><span style="left:0.8px;top:0.44px;display:inline-block;transform-origin:0 0;transform:scaleX(0.8742)">mbean_multi_sensor_prop (Skipped: Missing from_time &amp; rl)</span></div>
<div class="c" style="left:616px;width:70px;font-size:10.5px"><span style="left:2.7px;top:0.61px;display:inline-block;transform-origin:0 0;transform:scaleX(0.93)">0</span></div>
<div class="c" style="left:687px;width:107px;font-size:10.5px"><span style="left:2.2px;top:0.61px;display:inline-block;transform-origin:0 0;transform:scaleX(0.943)">2026-02-10 15:40:14</span></div>
</div>
<div class="row alt" style="top:516.71px">
<div class="ind"></div>
<div class="c" style="left:23px;width:37px;font-size:10.5px"><span style="left:3px;top:0.30px;display:inline-block;transform-origin:0 0;transform:scaleX(0.95)">3195</span></div>
<div class="c" style="left:61px;width:554px;font-size:11.0px"><span style="left:0.8px;top:0.13px;display:inline-block;transform-origin:0 0;transform:scaleX(0.8736)">mbean_multi_sensor_value_temp (Skipped: Missing from_time &amp; rl)</span></div>
<div class="c" style="left:616px;width:70px;font-size:10.5px"><span style="left:2.7px;top:0.30px;display:inline-block;transform-origin:0 0;transform:scaleX(0.93)">0</span></div>
<div class="c" style="left:687px;width:107px;font-size:10.5px"><span style="left:2.2px;top:0.30px;display:inline-block;transform-origin:0 0;transform:scaleX(0.943)">2026-02-10 15:40:14</span></div>
</div>
<div class="row" style="top:532.02px">
<div class="ind"></div>
</div>
</div>
</div>
<div class="a" style="left:28px;top:24px;width:1px;height:513px;background:#d0d0d0"></div>
<div class="a" style="left:6px;top:23px;width:1px;height:514px;background:#a0a0a0"></div>
<svg class="a" style="left:12px;top:46px" width="6" height="10" viewBox="0 0 6 10"><path d="M0 0 L5.5 4.75 L0 9.5Z" fill="#404040"/></svg>
<div class="a" id="tab"></div>
<div class="a" id="tabgray"></div>
<div class="a" style="left:12.9px;top:539.9px;font-size:10px;line-height:10px;color:#2b70d4;white-space:nowrap;letter-spacing:0.08px">archive_log 29</div>
<svg class="a" style="left:85px;top:542px" width="9" height="9" viewBox="0 0 9 9"><path d="M1.2 1.3 L7.6 7.4 M7.6 1.3 L1.2 7.4" stroke="#7d7d7d" stroke-width="1.2"/></svg>
</body></html>
